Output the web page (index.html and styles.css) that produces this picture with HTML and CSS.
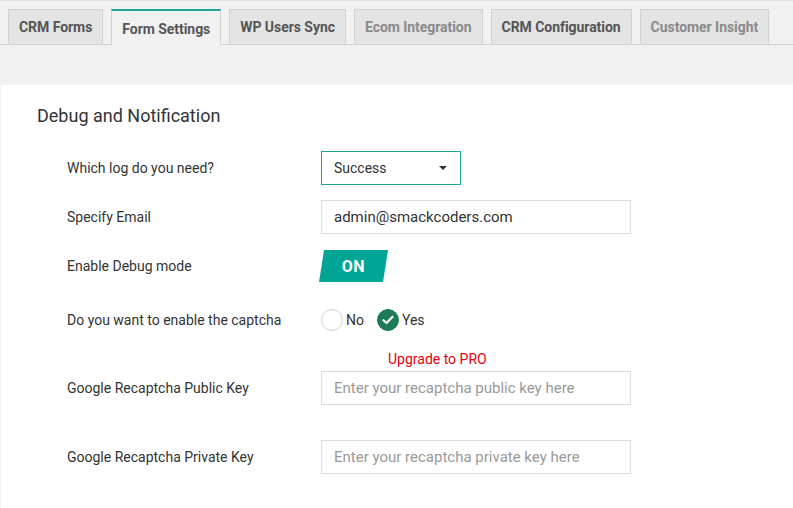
FILE: index.html
```html
<!DOCTYPE html>
<html>
<head>
<meta charset="utf-8">
<link rel="stylesheet" href="styles.css">
</head>
<body>
<div class="page">
  <nav class="tabs">
    <div class="tab">CRM Forms</div>
    <div class="tab active">Form Settings</div>
    <div class="tab">WP Users Sync</div>
    <div class="tab muted">Ecom Integration</div>
    <div class="tab">CRM Configuration</div>
    <div class="tab muted">Customer Insight</div>
  </nav>
  <main class="panel">
    <h2 class="title">Debug and Notification</h2>
    <div class="form">
      <div class="row r-log">
        <div class="label">Which log do you need?</div>
        <div class="select"><span>Success</span><span class="caret"></span></div>
      </div>
      <div class="row r-email">
        <div class="label">Specify Email</div>
        <div class="input">admin@smackcoders.com</div>
      </div>
      <div class="row r-debug">
        <div class="label">Enable Debug mode</div>
        <div class="toggle">ON</div>
      </div>
      <div class="row r-captcha">
        <div class="label">Do you want to enable the captcha</div>
        <div class="radios">
          <span class="radio"></span><span class="rlabel">No</span>
          <span class="radio checked"><svg width="12" height="10" viewBox="0 0 12 10"><path d="M1.5 5.2 L4.6 8 L10.5 1.8" fill="none" stroke="#fff" stroke-width="2.2" stroke-linecap="round" stroke-linejoin="round"/></svg></span><span class="rlabel">Yes</span>
        </div>
      </div>
      <div class="upgrade">Upgrade to PRO</div>
      <div class="row r-pub">
        <div class="label">Google Recaptcha Public Key</div>
        <div class="input placeholder">Enter your recaptcha public key here</div>
      </div>
      <div class="row r-priv">
        <div class="label">Google Recaptcha Private Key</div>
        <div class="input placeholder">Enter your recaptcha private key here</div>
      </div>
    </div>
  </main>
</div>
</body>
</html>
```
FILE: styles.css
```css
* { box-sizing: border-box; }
html, body { margin: 0; padding: 0; }
body {
  background: #f1f1f1;
  font-family: Roboto, "Liberation Sans", sans-serif;
  color: #333;
  width: 793px;
  height: 508px;
  overflow: hidden;
}
.page {
  border-top: 1px solid #e2e2e2;
  height: 508px;
  display: flex;
  flex-direction: column;
}
.tabs {
  display: flex;
  gap: 8px;
  padding: 8px 0 0 8px;
  border-bottom: 1px solid #cfcfcf;
  height: 44px;
}
.tab {
  height: 36px;
  margin-bottom: -1px;
  padding: 0 10px;
  background: #e4e4e4;
  border: 1px solid #d2d2d2;
  border-bottom-color: #cfcfcf;
  font-size: 14px;
  font-weight: 700;
  color: #555;
  display: flex;
  align-items: center;
  letter-spacing: -0.05px;
}
.tab.muted { color: #8a8a8a; }
.tab.active {
  background: #f1f1f1;
  border-top: 2px solid #1ea596;
  border-bottom-color: #f1f1f1;
  padding-top: 2px;
}
.panel {
  flex: 1;
  margin: 40px 0 0 1px;
  background: #fff;
  padding: 19px 0 0 36px;
}
.title {
  margin: 0;
  font-size: 18px;
  font-weight: 400;
  line-height: 24px;
  color: #333;
}
.form {
  padding-left: 30px;
  margin-top: 23px;
}
.row {
  display: flex;
  align-items: center;
}
.label {
  width: 254px;
  font-size: 14px;
  color: #333;
}
.r-log { height: 34px; }
.r-email { height: 34px; margin-top: 15px; }
.r-debug { height: 32px; margin-top: 16px; }
.r-captcha { height: 34px; margin-top: 21px; }
.r-pub { height: 34px; margin-top: 2px; }
.r-priv { height: 34px; margin-top: 35px; }
.select {
  width: 140px;
  height: 34px;
  border: 1px solid #1ea596;
  display: flex;
  align-items: center;
  justify-content: space-between;
  padding: 0 12px 0 12px;
  font-size: 14px;
  color: #333;
}
.caret {
  width: 0;
  height: 0;
  border-left: 4px solid transparent;
  border-right: 4px solid transparent;
  border-top: 4px solid #333;
  margin-right: 1px;
}
.input {
  width: 310px;
  height: 34px;
  border: 1px solid #dcdcdc;
  display: flex;
  align-items: center;
  padding: 0 12px;
  font-size: 15px;
  color: #333;
}
.input.placeholder { color: #999; }
.toggle {
  width: 69px;
  height: 32px;
  margin-left: -2px;
  background: #00a595;
  clip-path: polygon(5px 0, 69px 0, 64px 32px, 0 32px);
  color: #fff;
  font-weight: 700;
  font-size: 16px;
  display: flex;
  align-items: center;
  justify-content: center;
  letter-spacing: 0.5px;
}
.radios {
  display: flex;
  align-items: center;
}
.radio {
  width: 22px;
  height: 22px;
  border-radius: 50%;
  border: 1px solid #cfcfcf;
  background: #fff;
  display: flex;
  align-items: center;
  justify-content: center;
}
.radio.checked {
  background: #1d7a57;
  border-color: #1d7a57;
}
.rlabel {
  font-size: 14px;
  color: #333;
  margin-left: 3px;
  margin-right: 13px;
}
.upgrade {
  margin: 12px 0 0 321px;
  font-size: 14px;
  line-height: 20px;
  color: #e8000b;
}
```
